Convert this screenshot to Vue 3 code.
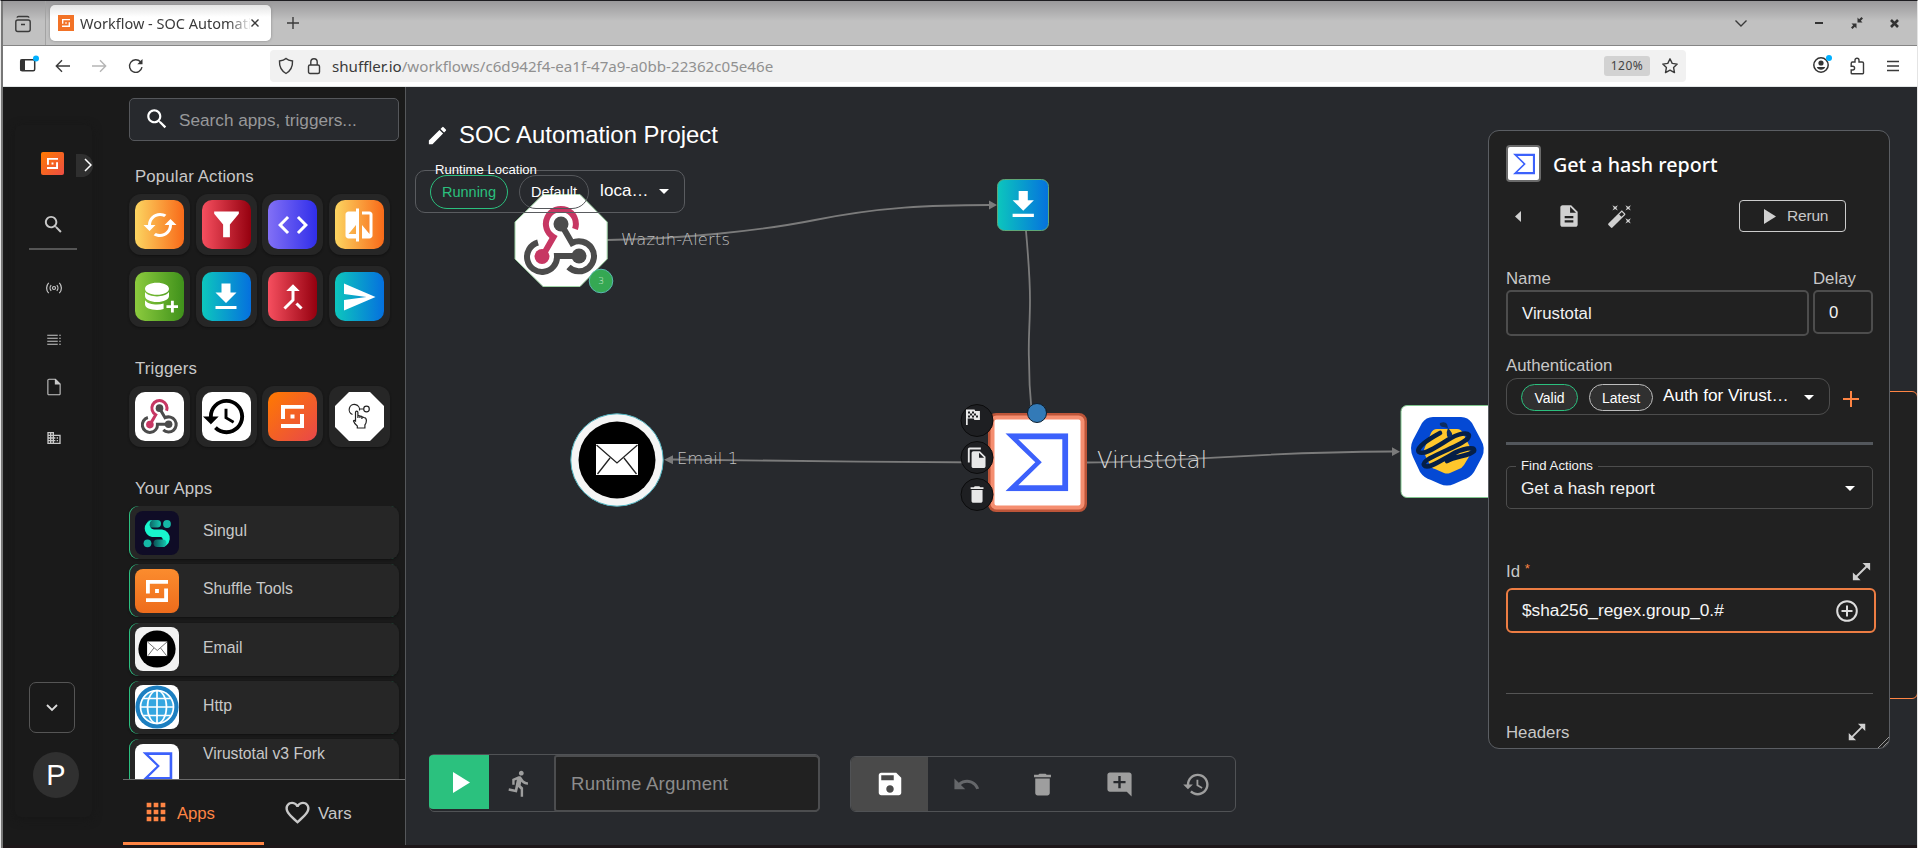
<script setup>
const icons = {
  search: 'M15.5 14h-.79l-.28-.27C15.41 12.59 16 11.11 16 9.5 16 5.91 13.09 3 9.5 3S3 5.91 3 9.5 5.91 16 9.5 16c1.61 0 3.09-.59 4.23-1.57l.27.28v.79l5 4.99L20.49 19l-4.99-5zm-6 0C7.01 14 5 11.99 5 9.5S7.01 5 9.5 5 14 7.01 14 9.5 11.99 14 9.5 14z',
  edit: 'M3 17.25V21h3.75L17.81 9.94l-3.75-3.75L3 17.25zM20.71 7.04c.39-.39.39-1.02 0-1.41l-2.34-2.34a.9959.9959 0 0 0-1.41 0l-1.83 1.83 3.75 3.75 1.83-1.83z',
  trash: 'M6 19c0 1.1.9 2 2 2h8c1.1 0 2-.9 2-2V7H6v12zM19 4h-3.5l-1-1h-5l-1 1H5v2h14V4z',
  save: 'M17 3H5c-1.11 0-2 .9-2 2v14c0 1.1.89 2 2 2h14c1.1 0 2-.9 2-2V7l-4-4zm-5 16c-1.66 0-3-1.34-3-3s1.34-3 3-3 3 1.34 3 3-1.34 3-3 3zm3-10H5V5h10v4z',
  undo: 'M12.5 8c-2.65 0-5.05.99-6.9 2.6L2 7v9h9l-3.62-3.62c1.39-1.16 3.16-1.88 5.12-1.88 3.54 0 6.55 2.31 7.6 5.5l2.37-.78C21.08 11.03 17.15 8 12.5 8z',
  comment: 'M22 4c0-1.1-.9-2-2-2H4c-1.1 0-2 .9-2 2v12c0 1.1.9 2 2 2h14l4 4V4zm-5 7h-4v4h-2v-4H7V9h4V5h2v4h4v2z',
  history: 'M13 3c-4.97 0-9 4.03-9 9H1l3.89 3.89.07.14L9 12H6c0-3.87 3.13-7 7-7s7 3.13 7 7-3.13 7-7 7c-1.93 0-3.68-.79-4.94-2.06l-1.42 1.42C8.27 19.99 10.51 21 13 21c4.97 0 9-4.03 9-9s-4.03-9-9-9zm-1 5v5l4.28 2.54.72-1.21-3.5-2.08V8H12z',
  run: 'M13.49 5.48c1.1 0 2-.9 2-2s-.9-2-2-2-2 .9-2 2 .9 2 2 2zm-3.6 13.9l1-4.4 2.1 2v6h2v-7.5l-2.1-2 .6-3c1.3 1.5 3.3 2.5 5.5 2.5v-2c-1.9 0-3.5-1-4.3-2.4l-1-1.6c-.4-.6-1-1-1.7-1-.3 0-.5.1-.8.1l-5.2 2.2v4.7h2v-3.4l1.8-.7-1.6 8.1-4.9-1-.4 2 7 1.4z',
  doc: 'M14 2H6c-1.1 0-1.99.9-1.99 2L4 20c0 1.1.89 2 1.99 2H18c1.1 0 2-.9 2-2V8l-6-6zm2 16H8v-2h8v2zm0-4H8v-2h8v2zm-3-5V3.5L18.5 9H13z',
  file: 'M14 2H6c-1.1 0-1.99.9-1.99 2L4 20c0 1.1.89 2 1.99 2H18c1.1 0 2-.9 2-2V8l-6-6zM5.3 20.7V3.3h7.7v5.7h5.7v11.7H5.3z',
  business: 'M12 7V3H2v18h20V7H12zM6 19H4v-2h2v2zm0-4H4v-2h2v2zm0-4H4V9h2v2zm0-4H4V5h2v2zm4 12H8v-2h2v2zm0-4H8v-2h2v2zm0-4H8V9h2v2zm0-4H8V5h2v2zm10 12h-8v-2h2v-2h-2v-2h2v-2h-2V9h8v10zm-2-8h-2v2h2v-2zm0 4h-2v2h2v-2z',
  apps: 'M4 8h4V4H4v4zm6 12h4v-4h-4v4zm-6 0h4v-4H4v4zm0-6h4v-4H4v4zm6 0h4v-4h-4v4zm6-10v4h4V4h-4zm-6 4h4V4h-4v4zm6 6h4v-4h-4v4zm0 6h4v-4h-4v4z',
  heart: 'M16.5 3c-1.74 0-3.41.81-4.5 2.09C10.91 3.81 9.24 3 7.5 3 4.42 3 2 5.42 2 8.5c0 3.78 3.4 6.86 8.55 11.54L12 21.35l1.45-1.32C18.6 15.36 22 12.28 22 8.5 22 5.42 19.58 3 16.5 3zm-4.4 15.55l-.1.1-.1-.1C7.14 14.24 4 11.39 4 8.5 4 6.5 5.5 5 7.5 5c1.54 0 3.04.99 3.57 2.36h1.87C13.46 5.99 14.96 5 16.5 5c2 0 3.5 1.5 3.5 3.5 0 2.89-3.14 5.74-7.9 10.05z',
  cached: 'M19 8l-4 4h3c0 3.31-2.69 6-6 6-1.01 0-1.97-.25-2.8-.7l-1.46 1.46C8.97 19.54 10.43 20 12 20c4.42 0 8-3.58 8-8h3l-4-4zM6 12c0-3.31 2.69-6 6-6 1.01 0 1.97.25 2.8.7l1.46-1.46C15.03 4.46 13.57 4 12 4c-4.42 0-8 3.58-8 8H1l4 4 4-4H6z',
  funnel: 'M4 3.5h16v1.6L14.2 12v8.2h-4.4V12L4 5.1z',
  code: 'M9.4 16.6L4.8 12l4.6-4.6L8 6l-6 6 6 6 1.4-1.4zm5.2 0l4.6-4.6-4.6-4.6L16 6l6 6-6 6-1.4-1.4z',
  compare: 'M10 3H5c-1.1 0-2 .9-2 2v14c0 1.1.9 2 2 2h5v2h2V1h-2v2zm0 15H5l5-6v6zm9-15h-5v2h5v13l-5-6v9h5c1.1 0 2-.9 2-2V5c0-1.1-.9-2-2-2z',
  database: 'M10 2.5c4.4 0 8 1.6 8 4s-3.600 4-8 4-8-1.600-8-4 3.600-4 8-4zM2 8.700c1.500 2 4.500 2.900 8 2.900s6.500-.9 8-2.900v2.600c0 2.400-3.600 4-8 4s-8-1.600-8-4zM2 14.100c1.500 2 4.500 2.900 8 2.900 1.600 0 3.100-.2 4.400-.6V20c-1.300.4-2.800.600-4.400.600-4.400 0-8-1.400-8-3.800zM19.300 14.500h1.900v3h3v1.900h-3v3h-1.900v-3h-3v-1.900h3z',
  download: 'M19 9h-4V3H9v6H5l7 7 7-7zM5 18v2h14v-2H5z',
  merge: 'M17 20.41L18.41 19 15 15.59 13.59 17 17 20.41zM7.5 8H11v5.59L5.59 19 7 20.41l6-6V8h3.5L12 3.5 7.5 8z',
  send: 'M2.01 21L23 12 2.01 3 2 10l15 2-15 2z',
  copy: 'M16 1H4c-1.1 0-2 .9-2 2v14h2V3h12V1zm-1 4l6 6v10c0 1.1-.9 2-2 2H7.99C6.89 23 6 22.1 6 21l.01-14c0-1.1.89-2 1.99-2h7zm-1 7h5.5L14 6.5V12z',
  expand: 'M21 11V3h-8l3.29 3.29-10 10L3 13v8h8l-3.29-3.29 10-10z',
  wand: 'M7.5 5.6L10 7 8.6 4.5 10 2 7.5 3.4 5 2l1.4 2.5L5 7zm12 9.8L17 14l1.4 2.5L17 19l2.5-1.4L22 19l-1.4-2.5L22 14zM22 2l-2.5 1.4L17 2l1.4 2.5L17 7l2.5-1.4L22 7l-1.4-2.5zm-7.63 5.29c-.39-.39-1.02-.39-1.41 0L1.29 18.96c-.39.39-.39 1.02 0 1.41l2.34 2.34c.39.39 1.02.39 1.41 0L16.7 11.05c.39-.39.39-1.02 0-1.41l-2.33-2.35zm-1.03 5.49l-2.12-2.12 2.44-2.44 2.12 2.12-2.44 2.44z',
  list: 'M3 7.6h14V6.300H3v1.300zm0 4h14v-1.300H3v1.300zm0 4h14v-1.300H3v1.300zm0 4h14v-1.300H3v1.300zM19 7.600h2V6.300h-2v1.300zm0 4h2v-1.300h-2v1.300zm0 4h2v-1.300h-2v1.300zm0 4h2v-1.300h-2v1.300z',
}
const actions = [
  { icon: 'cached', tone: 'amber' },
  { icon: 'funnel', tone: 'red' },
  { icon: 'code', tone: 'violet' },
  { icon: 'compare', tone: 'amber' },
  { icon: 'database', tone: 'green' },
  { icon: 'download', tone: 'cyan' },
  { icon: 'merge', tone: 'red' },
  { icon: 'send', tone: 'cyan' },
]
const tools = ['undo', 'trash', 'comment', 'history']
</script>

<template>
  <svg class="defs" width="0" height="0">
    <defs>
      <linearGradient id="cyan" x1="0" x2="1"><stop offset="0" stop-color="#0cc6bd" /><stop offset="1" stop-color="#0571de" /></linearGradient>
      <linearGradient id="singul" x1="0" x2="1"><stop offset="0" stop-color="#0b4f55" /><stop offset="1" stop-color="#15c9b0" /></linearGradient>
      <symbol id="shuffle" viewBox="0 0 23 23">
        <path d="M0 0H23V3.800H4V14H0zM0 23H23V9H19V19H0zM9.500 9.500h4v4h-4z" fill="#fff" />
      </symbol>
      <symbol id="hook" viewBox="0 0 93 93">
        <g fill="none" stroke-width="6">
          <path d="M46.500 30L57.500 49A15 15 0 1 1 54 73" stroke="#4b4b4b" />
          <path d="M64.500 62H42.500A15 15 0 1 1 23.500 48.500" stroke="#4b4b4b" />
          <path d="M60.500 35A15 15 0 1 0 39 43L27.500 63" stroke="#c73763" />
        </g>
        <circle cx="46.500" cy="30" r="7.500" fill="#4b4b4b" />
        <circle cx="64.500" cy="62" r="7.500" fill="#4b4b4b" />
        <circle cx="27.500" cy="62.500" r="7.500" fill="#c73763" />
      </symbol>
      <symbol id="total" viewBox="0 0 63 58">
        <path d="M0 0H63V58H0L30 29zM13 6L36.500 29 13 52H57V6z" fill="#3c61fb" fill-rule="evenodd" />
      </symbol>
      <symbol id="mail" viewBox="0 0 42 31">
        <rect width="42" height="31" fill="#fff" />
        <path d="M.5 1L21 19 41.500 1M1.500 30L14 14M40.500 30L28 14" fill="none" stroke="#222" stroke-width="1.300" />
      </symbol>
    </defs>
  </svg>

  <div class="window">
    <header class="tabs-bar">
      <div class="tab-tools">
        <svg width="18" height="18" viewBox="0 0 18 18" class="line"><rect x="1.800" y="5" width="14.400" height="11.500" rx="2" /><path d="M3 2.600Q3.300 1.500 4.500 1.500h9Q14.700 1.500 15 2.600M7 9.500h4" /></svg>
      </div>
      <div class="tab">
        <span class="favicon"><svg width="8" height="8"><use href="#shuffle" /></svg></span>
        <span class="tab-title">Workflow - SOC Automati</span>
        <svg width="10" height="10" viewBox="0 0 10 10" class="line"><path d="M1.500 1.500l7 7M8.500 1.500l-7 7" /></svg>
      </div>
      <svg class="line new-tab" width="14" height="14" viewBox="0 0 14 14"><path d="M7 1v12M1 7h12" /></svg>
      <div class="win-buttons">
        <svg width="14" height="14" viewBox="0 0 14 14" class="line"><path d="M1.500 4.500L7 10l5.500-5.500" /></svg>
        <svg class="minimize" width="10" height="12" viewBox="0 0 10 12"><rect x="1" y="5" width="8" height="2" fill="#333" /></svg>
        <svg class="restore" width="12" height="12" viewBox="0 0 12 12"><path d="M6.500 0.500v5h5L9.800 3.800 12 1.500 10.500 0 8.200 2.200zM5.500 11.500v-5h-5L2.200 8.200 0 10.500 1.500 12l2.300-2.200z" fill="#333" /></svg>
        <svg class="close" width="9" height="9" viewBox="0 0 9 9"><path d="M1 1l7 7M8 1L1 8" stroke="#333" stroke-width="2.600" /></svg>
      </div>
    </header>

    <div class="nav-bar">
      <div class="nav-left">
        <svg width="20" height="18" viewBox="0 0 20 18"><rect x="1.700" y="4.700" width="14" height="11" rx="1.500" fill="none" stroke="#333" stroke-width="1.500" /><rect x="1.500" y="4.500" width="4.500" height="11.500" fill="#333" /><circle cx="17" cy="3.500" r="3" fill="#00b0ff" /></svg>
        <svg width="16" height="14" viewBox="0 0 16 14" class="line"><path d="M15 7H1.500M7 1.200L1.300 7 7 12.800" /></svg>
        <svg width="16" height="14" viewBox="0 0 16 14" class="line dim"><path d="M1 7h13.500M9 1.200L14.700 7 9 12.800" /></svg>
        <svg width="16" height="16" viewBox="0 0 16 16" class="line"><path d="M14 9.200A6.300 6.300 0 1 1 12.500 3.800" /><path d="M14.500 1v5.200H9.300z" fill="#333" stroke="none" /></svg>
      </div>
      <div class="address">
        <svg width="16" height="18" viewBox="0 0 16 18" class="line"><path d="M8 1.500C9.500 3 12 3.800 14.500 4c.3 5.500-1.500 9.500-6.500 12.500C3 13.500 1.200 9.500 1.500 4 4 3.800 6.500 3 8 1.500z" /></svg>
        <svg width="14" height="18" viewBox="0 0 14 18" class="line"><rect x="1.500" y="8" width="11" height="8.500" rx="1.500" /><path d="M3.800 8V5a3.200 3.200 0 0 1 6.400 0v3" /></svg>
        <span class="url"><b>shuffler.io</b>/workflows/c6d942f4-ea1f-47a9-a0bb-22362c05e46e</span>
        <span class="zoom">120%</span>
        <svg width="18" height="18" viewBox="0 0 18 18" class="line"><path d="M9 1.800l2.200 4.600 5 .700-3.600 3.500.9 5L9 13.200l-4.500 2.400.9-5L1.800 7.100l5-.7z" stroke-linejoin="round" /></svg>
      </div>
      <div class="nav-right">
        <svg width="20" height="20" viewBox="0 0 20 20"><circle cx="9" cy="11" r="7.200" fill="none" stroke="#333" stroke-width="1.500" /><circle cx="9" cy="9" r="2.600" fill="#333" /><path d="M4.800 13h8.400q-1 2.800-4.200 2.800T4.800 13z" fill="#333" /><circle cx="17" cy="4" r="3" fill="#00b0ff" /></svg>
        <svg width="15" height="18" viewBox="0 0 15 18" class="line"><path d="M1.200 6.500Q1.200 5 2.500 5H5V3.200a2 2 0 0 1 4 0V5h3.200q1.300 0 1.300 1.300V16q0 .7-.7.700H2q-.8 0-.8-.8V13h1.500a1.900 1.900 0 0 0 0-3.800H1.200z" /></svg>
        <svg width="12" height="12" viewBox="0 0 12 12" class="line"><path d="M0 1.500h12M0 6h12M0 10.500h12" /></svg>
      </div>
    </div>

    <main class="page">
      <nav class="rail">
        <div class="rail-card">
          <div class="brand">
            <span class="brand-logo"><svg width="11" height="11"><use href="#shuffle" /></svg></span>
            <span class="brand-open"><svg width="8" height="14" viewBox="0 0 8 14"><path d="M1 1l6 6-6 6" fill="none" stroke="#fff" stroke-width="1.500" /></svg></span>
          </div>
          <svg class="ri r-search" width="23" height="23" viewBox="0 0 24 24"><path :d="icons.search" /></svg>
          <div class="rail-line"></div>
          <svg class="r-cast" width="16" height="12" viewBox="0 0 16 12"><circle cx="8" cy="6" r="1.500" /><path d="M5.200 3.200a4 4 0 0 0 0 5.600M10.800 3.200a4 4 0 0 1 0 5.600M2.700 .8a7.500 7.500 0 0 0 0 10.400M13.300 .8a7.500 7.500 0 0 1 0 10.400" /></svg>
          <svg class="ri r-list" width="18" height="18" viewBox="0 0 24 24"><path :d="icons.list" /></svg>
          <svg class="ri r-file" width="20" height="20" viewBox="0 0 24 24"><path :d="icons.file" /></svg>
          <svg class="ri r-biz" width="16" height="16" viewBox="0 0 24 24"><path :d="icons.business" /></svg>
          <div class="org"><svg width="12" height="8" viewBox="0 0 12 8"><path d="M1 1l5 5 5-5" fill="none" stroke="#ddd" stroke-width="1.800" /></svg></div>
          <div class="avatar">P</div>
        </div>
      </nav>

      <aside class="side">
        <div class="search"><svg width="26" height="26" viewBox="0 0 24 24"><path :d="icons.search" fill="#fff" /></svg><span>Search apps, triggers...</span></div>
        <h3 class="first">Popular Actions</h3>
        <div class="tiles">
          <div v-for="a in actions" :key="a.icon" class="tile">
            <span :class="['chip', a.tone]"><svg :class="'g-' + a.icon" viewBox="0 0 24 24"><path :d="icons[a.icon]" fill="#fff" /></svg></span>
          </div>
        </div>
        <h3>Triggers</h3>
        <div class="tiles">
          <div class="tile"><span class="chip white"><svg width="47" height="47"><use href="#hook" /></svg></span></div>
          <div class="tile"><span class="chip white"><svg width="48" height="48" viewBox="1 0 24 24"><path :d="icons.history" /></svg></span></div>
          <div class="tile"><span class="chip orange"><svg width="23" height="23"><use href="#shuffle" /></svg></span></div>
          <div class="tile">
            <svg width="49" height="49" viewBox="0 0 49 49">
              <path d="M14 0H35L49 14V35L35 49H14L0 35V14z" fill="#fff" />
              <g fill="none" stroke="#222" stroke-width="1.200">
                <path d="M17.500 22.500A5.200 5.200 0 1 1 24.500 18.500M25 17h3.500" /><circle cx="31.500" cy="17" r="2.800" />
                <path d="M20.500 29V20.500q0-1.300 1.200-1.300t1.200 1.300V26v-2q1-.8 2 0v2-1.500q1-.8 2 0V27v-1.500q1-.6 2 0 2.500.3 2.500 3-.1 3-1.500 4.500V36H22.300v-2q-2.800-2-3.800-5 .5-1.300 2 0z" fill="#fff" />
              </g>
            </svg>
          </div>
        </div>
        <h3>Your Apps</h3>
        <div class="apps">
          <div class="app">
            <svg width="44" height="44" viewBox="0 0 44 44"><rect width="44" height="44" rx="8" fill="#0f0c26" /><rect x="12" y="9" width="14" height="7.500" rx="3.700" fill="url(#singul)" /><path d="M17 9A8.600 8.600 0 0 0 17 26H26Q28 26.500 28 31 28 35 25 36A8.700 8.700 0 0 0 27 18.500H19Q15.500 18 14.500 14 14.500 10.500 17 9z" fill="#18f5cd" /><rect x="18.500" y="28.500" width="13" height="7.500" rx="3.700" fill="url(#singul)" /><circle cx="32" cy="13" r="3.900" fill="#15b8a6" /><circle cx="12.500" cy="32.300" r="3.900" fill="#15b8a6" /></svg>
            <span>Singul</span>
          </div>
          <div class="app">
            <i class="logo tools-logo"><svg width="22" height="22"><use href="#shuffle" /></svg></i>
            <span>Shuffle Tools</span>
          </div>
          <div class="app">
            <svg width="44" height="44" viewBox="0 0 44 44"><rect width="44" height="44" rx="8" fill="#f2f2f2" /><circle cx="22" cy="22" r="18.600" /><use href="#mail" x="12" y="14.300" width="20.500" height="15" /></svg>
            <span>Email</span>
          </div>
          <div class="app">
            <svg width="44" height="44" viewBox="0 0 44 44"><rect width="44" height="44" rx="8" fill="#fff" /><circle cx="22" cy="22" r="21.600" fill="#1d7fc0" /><circle cx="22" cy="22" r="17.300" fill="#35a6e0" /><g fill="none" stroke="#fff" stroke-width="1.700"><circle cx="22" cy="22" r="16.500" /><ellipse cx="22" cy="22" rx="9.500" ry="16.500" /><path d="M22 5.500v33M5.500 22h33M8.500 13.500h27M8.500 30.500h27" /></g></svg>
            <span>Http</span>
          </div>
          <div class="app">
            <svg width="44" height="44" viewBox="0 0 44 44"><rect width="44" height="44" rx="8" fill="#fff" /><use href="#total" x="7.500" y="8" width="30" height="28" /></svg>
            <span class="high">Virustotal v3 Fork</span>
          </div>
        </div>
        <div class="side-tabs">
          <div class="side-tab on"><svg width="28" height="28" viewBox="0 0 24 24"><path :d="icons.apps" /></svg><span>Apps</span></div>
          <div class="side-tab"><svg width="29" height="29" viewBox="0 0 24 24"><path :d="icons.heart" /></svg><span>Vars</span></div>
        </div>
      </aside>

      <section class="canvas">
        <svg class="graph" width="1512" height="758" viewBox="406 87 1512 758">
          <g fill="none" stroke="#7b7b7b" stroke-width="1.800">
            <path d="M607 240C680 239 760 231 815 220C880 207 930 205 990 205" />
            <path d="M1026 231C1029 265 1030 280 1030 300C1030 325 1028 340 1029 360C1029 380 1030 395 1031.500 410" />
            <path d="M990 462.500C880 462 790 461 672 459.500" />
            <path d="M1086 462.500C1200 462 1240 452 1392 451.500" />
          </g>
          <g fill="#7b7b7b">
            <path d="M989 200.500L997 205 989 209.500zM673 455.200L664 459.700 673 464.200zM1392 447.300L1400 451.700 1392 456z" />
          </g>
          <path d="M543 194.500H580L607.200 222V259L580 286.500H543L515 259V222z" fill="#fff" stroke="#9fd3a5" stroke-linejoin="round" />
          <use href="#hook" x="514.500" y="194" width="93" height="93" />
          <circle cx="601" cy="281" r="11.800" fill="#35a853" stroke="#59b9b0" />
          <text x="601" y="284" class="count" text-anchor="middle">3</text>

          <rect x="997.500" y="179.500" width="51" height="51" rx="7" fill="url(#cyan)" stroke="#5fa777" />
          <g transform="translate(1005 186.500) scale(1.520)"><path :d="icons.download" fill="#fff" /></g>

          <rect x="990" y="415" width="95" height="95" rx="6" fill="#fff" stroke="#bd5539" stroke-width="4" />
          <rect x="992.500" y="417.500" width="90" height="90" rx="4" fill="#fff" stroke="#f58e70" stroke-width="4" />
          <use href="#total" x="1005.300" y="433.300" width="63" height="58" />
          <circle cx="1037" cy="413" r="9.500" fill="#337ab7" stroke="#0e1f2f" />
          <g fill="#1e1f22" stroke="#0b0b0c"><circle cx="977" cy="420.500" r="16" /><circle cx="977" cy="457.500" r="16" /><circle cx="977" cy="494.500" r="16" /></g>
          <g fill="#e8e8e8">
            <path fill-rule="evenodd" d="M966 409.500h8.500l.7 1.500h4.700v9h-5.500l-.7-1.500h-6v6.500h-1.700zM968 411.500v2h2v-2zM972 411.500v2h2v-2zM970 413.500v2h2v-2zM974 413.500v2h2v-2zM968 415.500v2h2v-2zM972 415.500v2h2v-2zM976 415.500v2h2v-2z" />
            <g transform="translate(966 446.600) scale(.93)"><path :d="icons.copy" /></g>
            <g transform="translate(966 483.500) scale(.920)"><path :d="icons.trash" /></g>
          </g>

          <circle cx="617" cy="460" r="46.200" fill="#f5f5f5" stroke="#4fb3c0" />
          <circle cx="617" cy="460" r="38.500" fill="#000" />
          <use href="#mail" x="596" y="444" width="42" height="31" />

          <rect x="1401" y="405.500" width="93" height="92" rx="6" fill="#fff" stroke="#7fc58d" />
          <path d="M1433 417h28q7 0 11 6l9 17q5 8 1 17l-8 15q-4 6-11 8l-9 4q-7 3-14 0l-9-4q-7-2-11-8l-7-15q-4-9 0-17l9-17q4-6 11-6z" fill="#0449d4" />
          <path d="M1437 429h20q4 0 6 4l7 14q1 4 0 8l-6 10q-2 3-5 4l-9 4q-3 1-6 0l-9-4q-4-1-5-4l-5-10q-2-4 0-8l6-14q2-4 6-4z" fill="#ffc72c" />
          <path d="M1440 433C1429 439 1415 448 1419 452C1424 456 1439 445 1451 438C1462 432 1472 432 1468 438C1463 446 1421 458 1424 465C1427 470 1440 461 1451 455C1462 448 1476 446 1474 451C1470 456 1455 456 1447 461" fill="none" stroke="#051f47" stroke-width="4.600" stroke-linecap="round" />
          <path d="M1448 428q5 5 4 8-3 3-5 0-1-4 1-8zM1440 423q5-2 7 1l1 4-5-1q-4-1-3-4z" fill="#0b2c62" />

          <text x="621" y="244.500" class="label small" textLength="109">Wazuh-Alerts</text>
          <text x="677" y="464.200" class="label small" textLength="61">Email 1</text>
          <text x="1097" y="468" class="label big" textLength="110">Virustotal</text>
        </svg>

        <div class="title-row"><svg width="23" height="23" viewBox="0 0 24 24"><path :d="icons.edit" fill="#fff" /></svg><h1>SOC Automation Project</h1></div>

        <div class="runtime">
          <span class="runtime-label">Runtime Location</span>
          <span class="pill ok">Running</span>
          <span class="pill">Default</span>
          <span class="loc">loca…</span>
          <i class="caret"></i>
        </div>

        <div class="execute">
          <div class="play"><svg width="17" height="21" viewBox="0 0 17 21"><path d="M0 0L17 10.500 0 21z" fill="#fff" /></svg></div>
          <div class="runner"><svg width="29" height="29" viewBox="0 0 24 24"><path :d="icons.run" /></svg></div>
          <div class="argument">Runtime Argument</div>
        </div>

        <div class="toolbar">
          <div class="tool active"><svg width="30" height="30" viewBox="0 0 24 24"><path :d="icons.save" /></svg></div>
          <div v-for="t in tools" :key="t" :class="['tool', t]"><svg width="29" height="29" viewBox="0 0 24 24"><path :d="icons[t]" /></svg></div>
        </div>

        <div class="behind"></div>

        <div class="panel">
          <div class="p-head"><i class="p-logo"><svg width="22" height="22" viewBox="0 0 22 22"><use href="#total" width="22" height="22" /></svg></i><h2>Get a hash report</h2></div>
          <div class="p-tools">
            <svg class="back" width="6" height="11" viewBox="0 0 6 11"><path d="M6 0v11L0 5.500z" /></svg>
            <svg class="p-doc" width="26" height="26" viewBox="0 0 24 24"><path :d="icons.doc" /></svg>
            <svg class="p-wand" width="26" height="26" viewBox="0 0 24 24"><path :d="icons.wand" /></svg>
            <div class="rerun"><svg width="12" height="15" viewBox="0 0 12 15"><path d="M0 0l12 7.500L0 15z" /></svg>Rerun</div>
          </div>
          <div class="pair">
            <div class="field name"><label>Name</label><div class="input">Virustotal</div></div>
            <div class="field delay"><label>Delay</label><div class="input short">0</div></div>
          </div>
          <label class="auth-label">Authentication</label>
          <div class="auth-row">
            <div class="auth"><span class="pill ok">Valid</span><span class="pill">Latest</span><span class="auth-name">Auth for Virust…</span><i class="caret"></i></div>
            <svg class="plus" width="16" height="16" viewBox="0 0 16 16"><path d="M8 0v16M0 8h16" stroke="#ff8544" stroke-width="2" /></svg>
          </div>
          <div class="thick"></div>
          <div class="find"><span class="find-label">Find Actions</span><span>Get a hash report</span><i class="caret"></i></div>
          <div class="id-row"><label>Id <sup>*</sup></label><svg width="23" height="23" viewBox="0 0 24 24"><path :d="icons.expand" /></svg></div>
          <div class="id-input"><span>$sha256_regex.group_0.#</span><svg width="22" height="22" viewBox="0 0 22 22"><circle cx="11" cy="11" r="9.800" fill="none" stroke="#ddd" stroke-width="2" /><path d="M11 5.500v11M5.500 11h11" stroke="#ddd" stroke-width="2" /></svg></div>
          <div class="thin"></div>
          <div class="headers"><label>Headers</label><svg width="22" height="22" viewBox="0 0 24 24"><path :d="icons.expand" /></svg></div>
          <svg class="grip" width="11" height="11" viewBox="0 0 11 11"><path d="M0 11L11 0M4 11l7-7M8 11l3-3" stroke="#999" stroke-width="1" /></svg>
        </div>
      </section>
    </main>
  </div>
</template>

<style>
html, body { margin: 0; overflow: hidden; background: #161616; }
</style>

<style scoped>
* { box-sizing: border-box; }
.defs { position: absolute; }
h1, h2, h3 { margin: 0; font-weight: 400; }
svg { display: block; flex: none; }
.window { width: 1918px; height: 848px; display: flex; flex-direction: column; background: #1d1719; border-top: 1px solid #1d1c20; border-left: 1px solid #e8e8e8; border-right: 1px solid #e4e4e4; box-shadow: inset 2px 0 #777; padding-left: 2px; font-family: "Liberation Sans", Arial, sans-serif; overflow: hidden; }
.line { fill: none; stroke: #3a3a3a; stroke-width: 1.400; }
.dim { stroke: #b5b5b5; }

.tabs-bar { height: 45px; flex: none; display: flex; align-items: center; background: linear-gradient(#9a999b, #c1c1c1 20px); border-bottom: 1px solid #858585; }
.tab-tools { width: 43px; height: 44px; border-right: 1px solid #a3a3a3; display: flex; align-items: center; padding: 2px 0 0 11px; }
.tab { width: 221px; height: 36px; margin: 0 0 0 4px; border-radius: 5px; background: linear-gradient(#e4e4e4, #fff 12px); box-shadow: 0 0 3px #888; display: flex; align-items: center; padding-left: 8px; }
.favicon { width: 16px; height: 16px; background: #f27226; display: flex; align-items: center; justify-content: center; margin-right: 6px; }
.tab-title { width: 170px; margin-right: 0; white-space: nowrap; font: 14.500px "Noto Sans", sans-serif; color: #3a3a3a; -webkit-mask-image: linear-gradient(90deg, #000 148px, transparent 172px); mask-image: linear-gradient(90deg, #000 148px, transparent 172px); }
.new-tab { margin-left: 15px; }
.win-buttons { margin-left: auto; display: flex; align-items: center; margin-right: 18px; }
.minimize { margin-left: 66px; }
.restore { margin-left: 27px; }
.close { margin-left: 27px; }

.nav-bar { height: 41px; flex: none; background: #fff; border-bottom: 1px solid #e2e6e6; display: flex; align-items: center; }
.nav-left { width: 267px; display: flex; align-items: center; padding-left: 16px; }
.nav-left svg:nth-child(2) { margin-left: 16px; }
.nav-left svg:nth-child(3) { margin-left: 20px; }
.nav-left svg:nth-child(4) { margin-left: 21px; }
.nav-left svg:first-child { margin-top: -4px; }
.address { width: 1416px; height: 32px; background: #f1f1f1; border-radius: 4px; display: flex; align-items: center; padding-left: 8px; }
.address svg:nth-child(2) { margin-left: 13px; }
.url { flex: 1; margin-left: 11px; font: 15.130px/20px "Noto Sans", sans-serif; color: #909090; margin-top: -1px; }
.url b { font-weight: 400; color: #3a3a3a; }
.zoom { width: 46px; height: 20px; border-radius: 3px; background: #d2d2d2; font: 12px/20px "Noto Sans", sans-serif; color: #444; text-align: center; letter-spacing: .5px; margin-right: 11px; }
.address svg:last-child { margin-right: 7px; }
.nav-right { margin-left: auto; display: flex; align-items: center; margin-right: 18px; }
.nav-right svg:first-child { margin-top: -4px; }
.nav-right svg:nth-child(2) { margin-left: 18px; }
.nav-right svg:nth-child(3) { margin-left: 22px; }

.page { height: 758px; flex: none; display: flex; background: #1a1a1a; }
.rail { width: 120px; padding: 38px 0 0 12px; }
.rail-card { width: 77px; height: 692px; background: #1a1a1a; border-radius: 6px; box-shadow: 0 2px 10px #171717; display: flex; flex-direction: column; align-items: flex-start; }
.ri { fill: #c8c8c8; }
.brand { display: flex; align-items: center; margin: 27px 0 0 26px; height: 23px; }
.brand-logo { width: 23px; height: 23px; border-radius: 2px; background: linear-gradient(135deg, #ff7a00, #ec4d44); display: flex; align-items: center; justify-content: center; }
.brand-open { width: 17px; height: 23px; margin: 3px 0 0 12px; border-radius: 0 12px 12px 0; background: #2f2f2f; display: flex; align-items: center; justify-content: flex-end; padding-right: 1px; }
.r-search { margin: 38px 0 0 27px; }
.rail-line { width: 48px; height: 2px; background: #555; margin: 12px 0 0 14px; }
.r-cast { margin: 32px 0 0 30.500px; fill: none; stroke: #c8c8c8; stroke-width: 1.200; }
.r-list { margin: 35.500px 0 0 29.500px; }
.r-file { margin: 29px 0 0 28.500px; }
.r-biz { margin: 33px 0 0 30.500px; }
.org { width: 46px; height: 51px; margin: 236.500px 0 0 14px; border: 1px solid #555; border-radius: 7px; display: flex; align-items: center; justify-content: center; }
.avatar { width: 46px; height: 46px; margin: 19px 0 0 18px; border-radius: 50%; background: #303030; color: #fff; font-size: 29px; line-height: 47px; text-align: center; }

.side { width: 283px; border-right: 1px solid #55575a; display: flex; flex-direction: column; padding-top: 11px; color: #c8c8c8; }
.search { width: 270px; height: 43px; flex: none; margin-left: 6px; border: 1px solid #55575b; border-radius: 5px; background: #27292d; display: flex; align-items: center; padding-left: 14px; }
.search svg { margin: -2px 9px 0 0; }
.search span { font-size: 17.200px; color: #97989a; padding-top: 2px; }
h3 { font-size: 16.800px; line-height: 24px; margin: 30px 0 5px 12px; letter-spacing: .15px; flex: none; }
h3.first { margin-top: 24px; }
.tiles { margin-left: 6px; display: grid; grid-template-columns: repeat(4, 61px); gap: 11px 5.600px; flex: none; }
.tile { height: 61px; border-radius: 12px; background: #262626; box-shadow: 0 1px 2px #111; display: flex; align-items: center; justify-content: center; }
.chip { width: 49px; height: 49px; border-radius: 10px; display: flex; align-items: center; justify-content: center; overflow: hidden; }
.chip svg { width: 36px; height: 36px; }
.chip.white svg { width: 47px; height: 47px; }
.chip.orange svg { width: 23px; height: 23px; }
.chip .g-funnel { width: 37px; height: 37px; }
.amber { background: linear-gradient(90deg, #fcd561, #f86a19); }
.red { background: linear-gradient(90deg, #f64f5f, #95000f); }
.violet { background: linear-gradient(90deg, #8270f5, #302eea); }
.green { background: linear-gradient(90deg, #8ccb3e, #3f911b); }
.cyan { background: linear-gradient(90deg, #0dc7bd, #0570de); }
.white { background: #fff; }
.orange { background: linear-gradient(135deg, #ff7a00, #e8474a); }
.apps { height: 273px; flex: none; overflow: hidden; display: flex; flex-direction: column; gap: 5.300px; padding-left: 6px; }
.app { width: 270px; height: 53px; flex: none; border-radius: 9px; background: #262626; box-shadow: inset 1px 0 #2cbf80, 0 1px 2px #111; display: flex; align-items: center; padding-left: 6px; }
.app span { font-size: 15.800px; margin: -3px 0 0 24px; }
.app span.high { margin-top: -23px; font-size: 15.700px; }
.logo { width: 44px; height: 44px; border-radius: 8px; display: flex; align-items: center; justify-content: center; }
.tools-logo { background: linear-gradient(#fb8c2e, #ee6c1c); }
.side-tabs { flex: 1; border-top: 1px solid #6a6a6a; display: grid; grid-template-columns: 1fr 1fr; }
.side-tab { display: flex; align-items: center; font-size: 16.800px; fill: #c8c8c8; padding: 2px 0 0 19px; gap: 6px; line-height: 20px; border-bottom: 3px solid transparent; }
.side-tab span { margin-top: 4px; letter-spacing: .1px; }
.side-tab.on { color: #ff8544; fill: #ff8544; border-color: #ff8544; gap: 7px; }
.side-tab.on span { letter-spacing: -.1px; }

.canvas { flex: 1; min-width: 0; position: relative; background: #27292d; overflow: hidden; }
.graph { position: absolute; left: 0; top: 0; }
.label { font-family: "DejaVu Sans", "Open Sans", sans-serif; font-weight: 200; fill: #c0c0c0; }
.small { font-size: 16.300px; }
.big { font-size: 22.800px; fill: #d6d6d6; }
.count { font: 300 9px "DejaVu Sans", sans-serif; fill: #cfe8d4; }
.title-row { position: absolute; left: 20px; top: 32px; height: 32px; display: flex; align-items: center; gap: 10px; color: #fff; }
.title-row h1 { font-size: 23.900px; line-height: 32px; white-space: nowrap; }
.runtime { position: absolute; left: 9px; top: 83px; width: 270px; height: 43px; border: 1px solid #5a5c60; border-radius: 10px; display: flex; align-items: center; padding-left: 14px; color: #fff; }
.runtime-label { position: absolute; left: 19px; top: -9px; font-size: 13.100px; line-height: 16px; }
.runtime .pill { width: 70px; height: 34px; margin-right: 11px; border: 1px solid #55575b; border-radius: 17px; font-size: 14.500px; line-height: 33px; text-align: center; }
.runtime .pill.ok { width: 78px; border-color: #2bc07e; color: #2bc07e; }
.loc { font-size: 17px; width: 59px; margin-top: -2px; letter-spacing: .1px; }
.caret { width: 0; height: 0; border: 5.500px solid transparent; border-top-color: #fff; border-bottom: 0; }
.execute { position: absolute; left: 23px; top: 667px; width: 391px; height: 58px; border: 1px solid #505255; border-radius: 5px; display: flex; }
.play { width: 60px; height: 54px; margin-left: -1px; background: #2bc17e; border-radius: 4px 0 0 4px; display: flex; align-items: center; padding-left: 24px; }
.runner { width: 65px; display: flex; align-items: center; justify-content: center; padding-right: 4px; fill: #9e9e9e; }
.argument { flex: 1; margin: 0 -1px -1px 0; background: #212121; border: 2px solid #4c4d4f; border-radius: 3px 5px 5px 3px; font-size: 18.600px; line-height: 53px; color: #8c8c8c; padding-left: 15px; letter-spacing: .2px; }
.toolbar { position: absolute; left: 444px; top: 669px; width: 386px; height: 56px; border: 1px solid #505255; border-radius: 6px; display: flex; }
.tool { width: 76.600px; display: flex; align-items: center; justify-content: center; fill: #9e9e9e; }
.tool.active { width: 77px; background: #4a4a4a; fill: #fff; border-radius: 5px 0 0 5px; }
.tool.undo { fill: #65676a; }
.behind { position: absolute; left: 1300px; top: 304px; width: 212px; height: 308px; background: #212121; border: 1px solid #ff8544; border-radius: 6px; }

.panel { position: absolute; left: 1082px; top: 43px; width: 402px; height: 619px; background: #212121; border: 1px solid #5b5e63; border-radius: 11px; padding: 14px 16px 0 17px; color: #c8c8c8; fill: #d0d0d0; font-size: 16.800px; overflow: hidden; display: flex; flex-direction: column; }
.p-head { display: flex; align-items: center; height: 37px; gap: 12px; flex: none; }
.p-logo { width: 35px; height: 37px; border: 2px solid #6a6a6a; border-radius: 4px; background: #fff; display: flex; align-items: center; justify-content: center; }
.p-head h2 { font: 500 19.700px/30px "Noto Sans", sans-serif; color: #fff; white-space: nowrap; padding-top: 2px; }
.p-tools { display: flex; align-items: center; height: 32px; margin: 18px 0 0 9px; flex: none; }
.p-doc { margin-left: 35px; }
.p-wand { margin-left: 25px; }
.rerun { margin-left: 106px; width: 107px; height: 32px; border: 1px solid #ccc; border-radius: 4px; display: flex; align-items: center; padding-left: 25px; gap: 11px; font-size: 15.500px; letter-spacing: -.2px; white-space: nowrap; }
.rerun svg { margin-left: -1px; }
.pair { display: flex; gap: 4px; margin-top: 35px; flex: none; }
.pair label { display: block; line-height: 24px; height: 23px; }
.input { width: 303px; height: 46px; border: 2px solid #4d4d4d; border-radius: 5px; color: #f2f2f2; line-height: 43px; padding-left: 14px; font-size: 16.800px; }
.input.short { width: 60px; height: 44px; line-height: 41px; }
.auth-label { line-height: 24px; height: 23px; margin-top: 18px; flex: none; }
.auth-row { display: flex; align-items: center; gap: 13px; flex: none; margin-top: 1px; }
.plus { margin-top: 4px; }
.auth { width: 324px; height: 37px; border: 1px solid #4d4d4d; border-radius: 11px; display: flex; align-items: center; padding: 2px 0 0 14px; }
.auth .pill { width: 64px; height: 27px; border: 1px solid #bdbdbd; border-radius: 14px; background: #303030; color: #fff; font-size: 14px; line-height: 26px; text-align: center; }
.auth .pill.ok { width: 57px; border-color: #2bc07e; margin-right: 11px; }
.auth-name { width: 141px; color: #fff; font-size: 17.200px; margin: -5px 0 0 10px; white-space: nowrap; }
.thick { height: 3px; background: #53575c; margin-top: 27px; flex: none; }
.find { height: 43px; margin-top: 21px; border: 1px solid #4d4d4d; border-radius: 5px; display: flex; align-items: center; justify-content: space-between; padding: 2px 17px 0 14px; color: #f2f2f2; font-size: 17.200px; position: relative; flex: none; }
.find-label { position: absolute; left: 9px; top: -9px; background: #212121; padding: 0 5px; font-size: 13.200px; line-height: 16px; }
.id-row, .headers { display: flex; justify-content: space-between; align-items: center; height: 24px; margin-top: 50px; flex: none; }
.id-row label, .headers label { padding-top: 1px; }
.id-row sup { color: #ff8544; font-size: 13px; line-height: 0; position: relative; top: 3px; }
.id-input { width: 370px; height: 45px; margin-top: 5px; border: 2px solid #ed7d43; border-radius: 6px; display: flex; align-items: center; justify-content: space-between; padding: 0 16px 0 14px; color: #f5f5f5; font-size: 17.300px; flex: none; }
.thin { height: 1px; background: #555; margin-top: 60px; flex: none; }
.headers { margin-top: 26px; padding-right: 5px; }
.grip { position: absolute; right: 0; bottom: 0; }
</style>
